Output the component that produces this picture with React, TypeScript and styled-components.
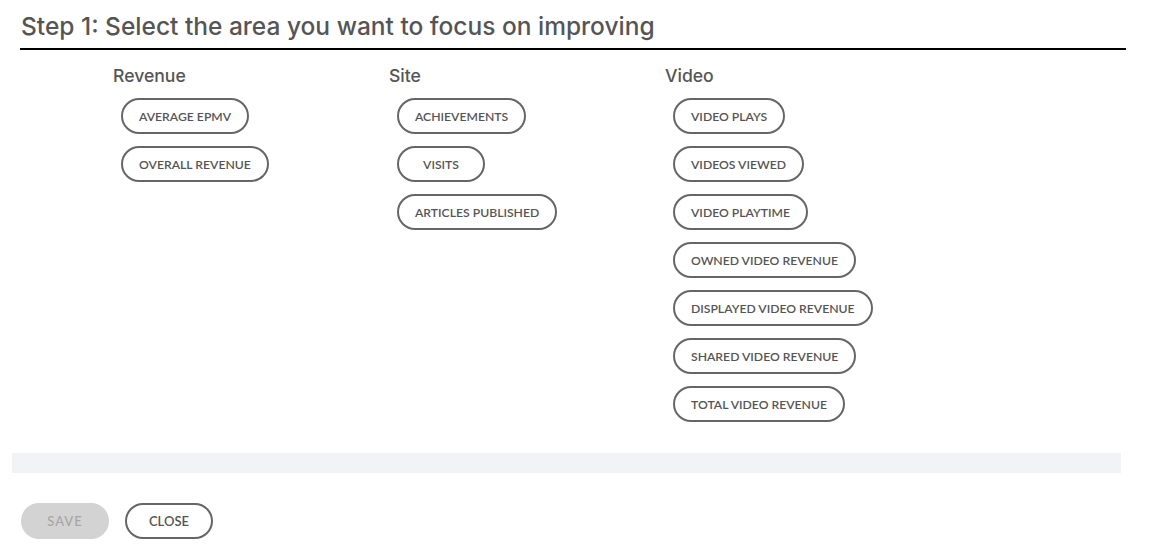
import styled, { createGlobalStyle } from 'styled-components';

const GlobalStyle = createGlobalStyle`
    body {
        margin: 0;
        background: #fff;
        font-family: Inter, "Noto Sans", sans-serif;
    }
`;

const Page = styled.div`
    width: 1155px;
    padding-top: 11px;
`;

const Title = styled.h2`
    margin: 0 29px 0 20px;
    padding: 0 0 7px 1px;
    font-size: 24.5px;
    font-weight: 500;
    line-height: 30px;
    color: #555;
    border-bottom: 2px solid #000;
`;

const Columns = styled.div`
    display: grid;
    grid-template-columns: repeat(3, 276px);
    padding: 15px 0 0 113px;
`;

const Column = styled.div`
    display: flex;
    flex-direction: column;
    align-items: flex-start;
`;

const Heading = styled.h3`
    margin: 0 0 11px;
    font-size: 17.6px;
    font-weight: 500;
    line-height: 22px;
    color: #555;
`;

const ChipList = styled.div`
    display: flex;
    flex-direction: column;
    align-items: flex-start;
    gap: 12px;
    padding-left: 8px;
`;

const Pill = styled.button`
    box-sizing: border-box;
    height: 36px;
    min-width: 88px;
    padding: 0 16px;
    border-radius: 18px;
    border: 2px solid #666;
    background: #fff;
    color: #555;
    font-family: Lato, "Noto Sans", sans-serif;
    font-size: 12.2px;
    font-weight: 600;
    text-transform: uppercase;
    white-space: nowrap;
    cursor: pointer;
`;

const ActionButton = styled(Pill)<{ $disabled?: boolean }>`
    font-size: 13px;
    border-color: ${p => (p.$disabled ? '#d3d3d3' : '#666')};
    background: ${p => (p.$disabled ? '#d3d3d3' : '#fff')};
    color: ${p => (p.$disabled ? '#a6a6a6' : '#555')};
    font-weight: ${p => (p.$disabled ? 500 : 600)};
    letter-spacing: ${p => (p.$disabled ? '1px' : '0')};
`;

const Band = styled.div`
    height: 20px;
    margin: 31px 34px 0 12px;
    background: #f2f3f7;
`;

const Actions = styled.div`
    display: flex;
    gap: 16px;
    padding: 30px 0 0 21px;
`;

const groups = [
    { title: 'Revenue', items: ['Average EPMV', 'Overall Revenue'] },
    { title: 'Site', items: ['Achievements', 'Visits', 'Articles Published'] },
    {
        title: 'Video',
        items: [
            'Video Plays',
            'Videos Viewed',
            'Video Playtime',
            'Owned Video Revenue',
            'Displayed Video Revenue',
            'Shared Video Revenue',
            'Total Video Revenue',
        ],
    },
];

export default function App() {
    return (
        <Page>
            <GlobalStyle />
            <Title>Step 1: Select the area you want to focus on improving</Title>
            <Columns>
                {groups.map(g => (
                    <Column key={g.title}>
                        <Heading>{g.title}</Heading>
                        <ChipList>
                            {g.items.map(item => (
                                <Pill key={item}>{item}</Pill>
                            ))}
                        </ChipList>
                    </Column>
                ))}
            </Columns>
            <Band />
            <Actions>
                <ActionButton $disabled>Save</ActionButton>
                <ActionButton>Close</ActionButton>
            </Actions>
        </Page>
    );
}
